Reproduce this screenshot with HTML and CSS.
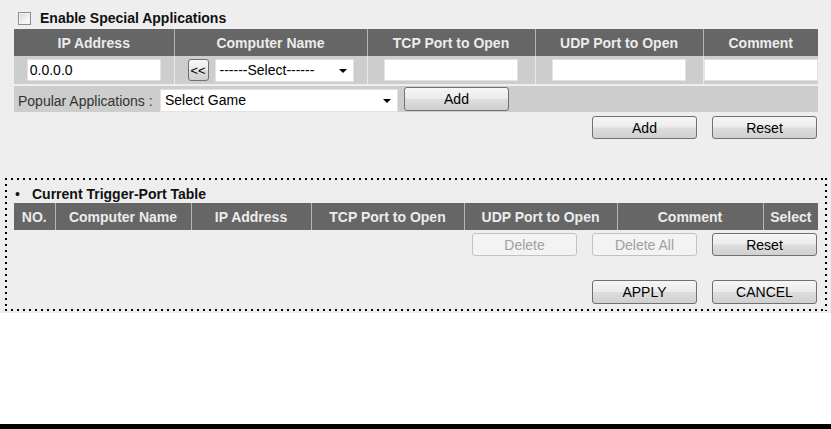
FILE: index.html
```html
<!DOCTYPE html>
<html lang="en">
<head>
<meta charset="utf-8">
<title>Special Applications</title>
<link rel="stylesheet" href="styles.css">
</head>
<body>
<div class="page">
  <div class="enable">
    <input type="checkbox" class="chk">
    <span>Enable Special Applications</span>
  </div>

  <table class="grid">
    <colgroup>
      <col style="width:160px"><col style="width:193px"><col style="width:168px"><col style="width:168px"><col style="width:115px">
    </colgroup>
    <thead>
      <tr><th>IP Address</th><th>Computer Name</th><th>TCP Port to Open</th><th>UDP Port to Open</th><th>Comment</th></tr>
    </thead>
    <tbody>
      <tr>
        <td><input class="txt" type="text" value="0.0.0.0"></td>
        <td>
          <div class="pick">
            <button class="btn btn-sm" type="button">&lt;&lt;</button>
            <span class="sel sel-name"><select><option>------Select------</option></select></span>
          </div>
        </td>
        <td><input class="txt" type="text"></td>
        <td><input class="txt" type="text"></td>
        <td class="cell-comment"><input class="txt txt-full" type="text"></td>
      </tr>
    </tbody>
  </table>

  <div class="popular">
    <span class="pop-label">Popular Applications :</span>
    <span class="sel sel-game"><select><option>Select Game</option></select></span>
    <button class="btn btn-pop" type="button">Add</button>
  </div>

  <div class="actions actions-top">
    <button class="btn" type="button">Add</button>
    <button class="btn" type="button">Reset</button>
  </div>

  <section class="trigger">
    <div class="trigger-title"><span class="dot">&bull;</span>Current Trigger-Port Table</div>
    <table class="grid grid-trigger">
      <colgroup>
        <col style="width:41px"><col style="width:136px"><col style="width:120px"><col style="width:153px"><col style="width:153px"><col style="width:146px"><col style="width:55px">
      </colgroup>
      <thead>
        <tr><th>NO.</th><th>Computer Name</th><th>IP Address</th><th>TCP Port to Open</th><th>UDP Port to Open</th><th>Comment</th><th>Select</th></tr>
      </thead>
    </table>
    <div class="actions actions-del">
      <button class="btn" type="button" disabled>Delete</button>
      <button class="btn" type="button" disabled>Delete All</button>
      <button class="btn" type="button">Reset</button>
    </div>
    <div class="actions actions-apply">
      <button class="btn btn-tall" type="button">APPLY</button>
      <button class="btn btn-tall" type="button">CANCEL</button>
    </div>
  </section>
</div>
<div class="footer-bar"></div>
</body>
</html>
```
FILE: styles.css
```css
html, body {
  margin: 0;
  padding: 0;
}
body {
  background: #fff;
  font-family: "Liberation Sans", Arial, sans-serif;
  font-size: 14px;
  color: #000;
}
.page {
  background: #eeeeee;
  height: 313px;
  padding-top: 10px;
  box-sizing: border-box;
}
.enable {
  display: flex;
  align-items: center;
  height: 16px;
  line-height: 16px;
  padding-left: 18px;
  margin-bottom: 3px;
  font-weight: bold;
  color: #111;
}
.chk {
  appearance: none;
  -webkit-appearance: none;
  width: 13px;
  height: 13px;
  margin: 0 9px 0 0;
  box-sizing: border-box;
  border: 1px solid #8e8f8f;
  background: linear-gradient(135deg, #d6d6d6, #f6f6f6 70%, #fdfdfd);
  box-shadow: inset 0 0 0 1px #f2f2f2;
}

.grid {
  border-collapse: collapse;
  table-layout: fixed;
  width: 804px;
  margin-left: 14px;
}
.grid th {
  background: #666666;
  color: #ececec;
  font-weight: bold;
  font-size: 14px;
  height: 27px;
  padding: 0;
  text-align: center;
  white-space: nowrap;
  border-left: 1px solid #b4b4b4;
}
.grid th:first-child,
.grid td:first-child {
  border-left: 0;
}
.grid td {
  background: #cdcdcd;
  height: 28px;
  padding: 0;
  border-left: 1px solid #e8e8e8;
  vertical-align: middle;
}
.txt {
  display: block;
  margin: 0 auto;
  width: 134px;
  height: 22px;
  box-sizing: border-box;
  border: 1px solid #e2e2e2;
  background: #fff;
  font: 14px "Liberation Sans", Arial, sans-serif;
  color: #000;
  padding: 0 2px;
  outline: none;
}
.txt-full {
  width: 100%;
}
.pick {
  display: flex;
  justify-content: center;
  align-items: center;
  gap: 6px;
}

.sel {
  position: relative;
  display: inline-block;
}
.sel select {
  appearance: none;
  -webkit-appearance: none;
  display: block;
  width: 100%;
  height: 100%;
  box-sizing: border-box;
  border: 1px solid #e2e2e2;
  background: #fff;
  font: 14px "Liberation Sans", Arial, sans-serif;
  color: #000;
  padding: 0 0 0 4px;
  margin: 0;
  outline: none;
}
.sel::after {
  content: "";
  position: absolute;
  right: 7px;
  top: 50%;
  margin-top: -1px;
  border-left: 4px solid transparent;
  border-right: 4px solid transparent;
  border-top: 4px solid #000;
}
.sel-name {
  width: 139px;
  height: 23px;
}
.sel-game {
  width: 238px;
  height: 23px;
}

.btn {
  width: 105px;
  height: 23px;
  box-sizing: border-box;
  padding: 0;
  margin: 0;
  border: 1px solid #707070;
  border-radius: 3px;
  background: linear-gradient(#f6f6f6, #ebebeb 48%, #dddddd 52%, #d0d0d0);
  font: 14px "Liberation Sans", Arial, sans-serif;
  color: #000;
}
.btn:disabled {
  border-color: #c2c2c2;
  background: #f3f3f3;
  color: #a0a0a0;
}
.btn-sm {
  width: 21px;
  height: 22px;
  font-size: 13px;
  line-height: 1;
}
.btn-tall {
  height: 24px;
}

.popular {
  display: flex;
  align-items: center;
  width: 804px;
  height: 26px;
  margin: 2px 0 0 14px;
  padding-left: 4px;
  box-sizing: border-box;
  background: #cdcdcd;
}
.pop-label {
  width: 142px;
  color: #333;
  padding-top: 3px;
}
.sel-game {
  margin-top: 2px;
}
.btn-pop {
  margin-left: 6px;
  height: 24px;
}

.actions {
  display: flex;
  justify-content: flex-end;
  gap: 15px;
  padding-right: 1px;
}
.actions-top {
  width: 804px;
  margin: 4px 0 0 14px;
  box-sizing: border-box;
}

.trigger {
  width: 822px;
  margin: 39px 0 0 5px;
  box-sizing: border-box;
  padding: 8px 9px 7px 9px;
  background-image:
    repeating-linear-gradient(to right, #000 0 2px, transparent 2px 6px),
    repeating-linear-gradient(to right, #000 0 2px, transparent 2px 6px),
    repeating-linear-gradient(to bottom, #000 0 2px, transparent 2px 6px),
    repeating-linear-gradient(to bottom, #000 0 2px, transparent 2px 6px);
  background-size: 100% 2px, 100% 2px, 2px 100%, 2px 100%;
  background-position: left top, left bottom, left top, right top;
  background-repeat: no-repeat;
}
.trigger-title {
  height: 16px;
  line-height: 16px;
  padding-left: 1px;
  font-weight: bold;
  color: #111;
}
.dot {
  display: inline-block;
  width: 17px;
  font-weight: normal;
}
.grid-trigger {
  margin: 1px 0 0 0;
}
.actions-del {
  margin-top: 3px;
}
.actions-apply {
  margin-top: 24px;
}

.footer-bar {
  height: 5px;
  margin-top: 111px;
  background: #000;
}
```
